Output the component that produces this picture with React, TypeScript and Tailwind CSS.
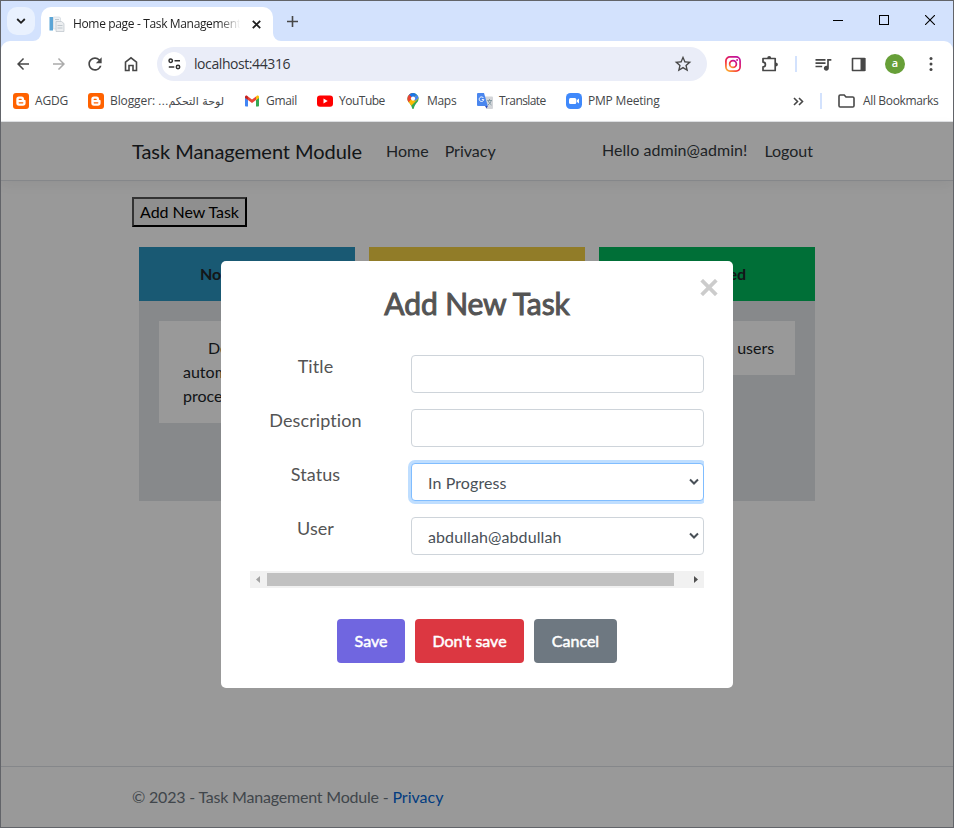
import React from 'react';
import { MdArrowBack, MdArrowForward, MdRefresh, MdStarBorder, MdQueueMusic } from 'react-icons/md';

const stroke = '#474747';

function TabStrip() {
  return (
    <div className="flex h-10 shrink-0 items-start bg-[#d3e2fd] pt-1.5">
      <div className="ml-1.5 flex size-7 items-center justify-center rounded-[10px] bg-[#e9f1fe]">
        <svg width="10" height="10" viewBox="0 0 10 10" fill="none" stroke="#1f1f1f" strokeWidth="1.8"><path d="M1.2 3 5 6.8 8.8 3" /></svg>
      </div>
      <div className="relative ml-1.5 flex h-[34px] w-[232px] items-center rounded-t-[10px] bg-white">
        <svg className="absolute bottom-0 -left-2" width="8" height="8"><path d="M8 0V8H0A8 8 0 0 0 8 0Z" fill="#fff" /></svg>
        <svg className="absolute -right-2 bottom-0" width="8" height="8"><path d="M0 0V8H8A8 8 0 0 1 0 0Z" fill="#fff" /></svg>
        <svg className="ml-2 shrink-0" width="16" height="16" viewBox="0 0 16 16">
          <rect x=".5" y="1" width="3.5" height="13.5" fill="#5ba5d6" />
          <path d="M4.500 1h6l1 1v11h-7z" fill="#edf1f5" stroke="#ccd3da" strokeWidth=".6" />
          <path d="M7 5.500h5.500l2.500 2v8H7z" fill="#eceef0" stroke="#bcc3ca" strokeWidth=".7" />
          <path d="M8.500 9.500h5M8.500 12h5M6 3.500h4" stroke="#b4bcc4" strokeWidth=".8" />
        </svg>
        <div className="ml-2 w-[169px] text-[12px] leading-4 tracking-[-0.35px] whitespace-nowrap text-[#1f1f1f] [mask-image:linear-gradient(to_right,#000_86%,transparent_99%)]">Home page - Task Management</div>
        <svg className="ml-2.5" width="9" height="9" viewBox="0 0 9 9" stroke="#1f1f1f" strokeWidth="1.8"><path d="M.8.8l7.4 7.4M8.2.8.8 8.2" /></svg>
      </div>
      <svg className="mt-[9px] ml-[14px]" width="11" height="11" viewBox="0 0 11 11" stroke="#474747" strokeWidth="1.6"><path d="M5.5 0v11M0 5.5h11" /></svg>
      <div className="mt-2 mr-[18px] ml-auto flex items-center gap-9 text-black">
        <svg width="10" height="10" stroke="currentColor"><path d="M0 5.5h10" /></svg>
        <svg width="10" height="10" fill="none" stroke="currentColor"><rect x=".5" y=".5" width="9" height="9" /></svg>
        <svg width="10" height="10" stroke="currentColor" strokeWidth="1.1"><path d="M0 0l10 10M10 0 0 10" /></svg>
      </div>
    </div>
  );
}

function Toolbar() {
  return (
    <div className="flex h-[46px] items-center pl-1 text-[#474747]">
      <div className="flex w-9 justify-center"><MdArrowBack size={18} /></div>
      <div className="flex w-9 justify-center text-[#ababab]"><MdArrowForward size={18} /></div>
      <div className="flex w-9 justify-center"><MdRefresh size={20} /></div>
      <div className="flex w-9 justify-center">
        <svg width="14" height="16" viewBox="0 0 14 16" fill="none" stroke={stroke} strokeWidth="1.6"><path d="M1.5 6.2 7 1.8l5.5 4.4v8.3H9V9.5H5v5H1.5z" /></svg>
      </div>
      <div className="ml-2 flex h-[34px] w-[550px] items-center rounded-full bg-[#eaedf8] pl-[5px]">
        <div className="flex size-6 items-center justify-center rounded-full bg-white">
          <svg width="13" height="12" viewBox="0 0 13 12" fill="none" stroke="#303030" strokeWidth="1.5"><circle cx="2.7" cy="2.7" r="1.7" /><path d="M6.5 2.7H12M.8 9h5.5" /><circle cx="10" cy="9" r="1.7" /></svg>
        </div>
        <div className="ml-2 text-[14px] leading-5 tracking-[-0.42px] text-[#33353a]">localhost:44316</div>
        <MdStarBorder size={20} className="mr-3.5 ml-auto" />
      </div>
      <svg className="ml-[18px]" width="16" height="16" viewBox="0 0 16 16" fill="none">
        <defs><linearGradient id="insta" x1="0" y1="1" x2=".7" y2="0"><stop stopColor="#ffc02e" /><stop offset=".45" stopColor="#f5283c" /><stop offset="1" stopColor="#c1129b" /></linearGradient></defs>
        <g stroke="url(#insta)" strokeWidth="1.7"><rect x=".9" y=".9" width="14.2" height="14.2" rx="4" /><circle cx="8" cy="8" r="3.4" /></g><circle cx="12.1" cy="3.9" r="1" fill="#d0158f" />
      </svg>
      <svg className="ml-5" width="18" height="18" viewBox="0 0 18 18">
        <path d="M2 3.500h12.200v12H2v-3.600a2.400 2.400 0 0 0 0-4.800z" fill="none" stroke={stroke} strokeWidth="1.700" strokeLinejoin="round" />
        <path d="M6.200 3.200a2 2.300 0 0 1 4 0zM14.600 7.500a2.300 2 0 0 1 0 4z" fill={stroke} />
      </svg>
      <div className="ml-4 h-4 w-[2px] bg-[#d3e2fd]" />
      <MdQueueMusic size={20} className="ml-4" />
      <svg className="ml-[18px]" width="15" height="15" viewBox="0 0 15 15"><path d="M1.500 1.500h12v12h-12z" fill="none" stroke={stroke} strokeWidth="1.600" strokeLinejoin="round" /><path d="M9.500 1h5v13h-5z" fill={stroke} /></svg>
      <div className="ml-[19px] flex size-5 items-center justify-center rounded-full bg-[#679f38] pb-px text-[11px] font-semibold text-white">a</div>
      <svg className="ml-6" width="4" height="16" fill={stroke}><circle cx="2" cy="2.5" r="1.5" /><circle cx="2" cy="8" r="1.5" /><circle cx="2" cy="13.5" r="1.5" /></svg>
    </div>
  );
}

const Blogger = () => (
  <svg width="16" height="16" viewBox="0 0 16 16"><rect width="16" height="16" rx="3" fill="#ff6200" /><path d="M6 3.5h2.5A2.5 2.5 0 0 1 11 6c0 .8.3 1 1 1 .4 0 .6.3.6.7V10a2.7 2.7 0 0 1-2.7 2.7H6A2.7 2.7 0 0 1 3.3 10V6.2A2.7 2.7 0 0 1 6 3.5Z" fill="#fff" /><path d="M6.2 6.3h2M6.2 9.8h3.6" stroke="#ff6200" strokeWidth="1.3" strokeLinecap="round" /></svg>
);
const Gmail = () => (
  <svg width="16" height="16" viewBox="0 0 16 16"><path d="M1 4.5v8.2c0 .5.4.8.8.8H4V6.8z" fill="#4285f4" /><path d="M12 6.8v6.7h2.2c.5 0 .8-.3.8-.8V4.5z" fill="#34a853" /><path d="M4 7V3.5l4 3 4-3V7l-4 3z" fill="#ea4335" /><path d="M1 5V4c0-1.3 1.4-1.9 2.4-1.1l.6.5V7z" fill="#c5221f" /><path d="M15 5V4c0-1.3-1.4-1.9-2.4-1.1l-.6.5V7z" fill="#fbbc04" /></svg>
);
const YouTube = () => (
  <svg width="16" height="16" viewBox="0 0 16 16"><rect y="2.4" width="16" height="11.4" rx="3" fill="#f00" /><path d="M6.5 5.6v5L10.7 8.1z" fill="#fff" /></svg>
);
const Maps = () => (
  <svg width="16" height="16" viewBox="0 0 16 16">
    <defs><clipPath id="pin"><path d="M8 0a5.6 5.6 0 0 1 5.6 5.6c0 3.8-3.4 4.8-4.6 9.1C8.800 15.500 8.500 16 8 16s-.8-.5-1-1.3C5.800 10.400 2.400 9.400 2.400 5.600A5.600 5.600 0 0 1 8 0Z" /></clipPath></defs>
    <g clipPath="url(#pin)"><path d="M0 0h16v16H0z" fill="#34a853" /><path d="M0 12V5l6 2 4-5 4 3-9 9z" fill="#fbbc04" /><path d="M0 0h7l1 4-5 6H0z" fill="#ea4335" /><path d="M4 1.500 8 5.600 13 0H5z" fill="#1a73e8" /><path d="M8 5.600 13 1l2 3-5 4z" fill="#4285f4" /></g><circle cx="8" cy="5.600" r="2.100" fill="#fff" />
  </svg>
);
const Translate = () => (
  <svg width="16" height="16" viewBox="0 0 16 16"><path d="M6 3.500h9a1 1 0 0 1 1 1V15a1 1 0 0 1-1 1H9.500z" fill="#d3d5d9" /><path d="M1 0h6l3.800 13H1a1 1 0 0 1-1-1V1a1 1 0 0 1 1-1Z" fill="#4a86ee" /><path d="M8 13h2.800L9.600 15.500z" fill="#3048b8" /><path d="M10.200 7.500H15M12.500 6v1.500m1.700 0c-.5 2-1.700 3.500-3.300 4.500m.4-4c.6 1.700 1.800 3 3.200 4" fill="none" stroke="#7d949d" strokeWidth=".9" /><path d="M6.500 5A2.300 2.300 0 1 0 6.800 6.600H4.800" fill="none" stroke="#fff" /></svg>
);
const Zoom = () => (
  <svg width="16" height="16" viewBox="0 0 16 16"><rect width="16" height="16" rx="4.500" fill="#4089fb" /><rect x="3" y="5" width="7.300" height="6" rx="1.500" fill="#fff" /><path d="M10.800 7.200 13 5.500v5l-2.200-1.700z" fill="#fff" /></svg>
);

function Bookmark({ icon, width, children }: { icon: React.ReactNode; width: string; children: React.ReactNode }) {
  return <div className={`flex shrink-0 items-center gap-1.5 whitespace-nowrap ${width}`}>{icon}<span>{children}</span></div>;
}

function Bookmarks() {
  return (
    <div className="flex h-[28px] items-center pl-3 text-[12px] text-[#45474a]">
      <Bookmark icon={<Blogger />} width="w-[75px] tracking-[-0.2px]">AGDG</Bookmark>
      <Bookmark icon={<Blogger />} width="w-[156px] tracking-[-0.1px]">Blogger: <bdi dir="rtl" className="font-['DejaVu_Sans',sans-serif] text-[11px]">لوحة التحكم...</bdi></Bookmark>
      <Bookmark icon={<Gmail />} width="w-[73px] tracking-[-0.3px]">Gmail</Bookmark>
      <Bookmark icon={<YouTube />} width="w-[88px] tracking-[-0.5px]">YouTube</Bookmark>
      <Bookmark icon={<Maps />} width="w-[72px] tracking-[-0.3px]">Maps</Bookmark>
      <Bookmark icon={<Translate />} width="w-[89px] tracking-[-0.6px]">Translate</Bookmark>
      <Bookmark icon={<Zoom />} width="w-[100px] tracking-[-0.2px]">PMP Meeting</Bookmark>
      <svg className="ml-auto" width="11" height="9" viewBox="0 0 11 9" fill="none" stroke={stroke} strokeWidth="1.600"><path d="m1 1 3.500 3.500L1 8M6 1l3.500 3.500L6 8" /></svg>
      <div className="ml-4 h-4 w-[2px] bg-[#d3e2fd]" />
      <svg className="ml-4" width="17" height="14" viewBox="0 0 17 14" fill="none" stroke={stroke} strokeWidth="1.600"><path d="M1 2.200Q1 1 2.200 1h4l1.800 2h6.700q1.300 0 1.300 1.300v7.400q0 1.300-1.300 1.300H2.200Q1 13 1 11.700z" /></svg>
      <span className="mr-[14px] ml-2 w-[76px] tracking-[-0.35px] whitespace-nowrap">All Bookmarks</span>
    </div>
  );
}

function Column({ title, color, children }: { title: string; color: string; children?: React.ReactNode }) {
  return (
    <div className="h-[254px] w-[216px] bg-[#e2e4e8] text-center">
      <div className={`flex h-[54px] items-center justify-center font-bold ${color}`}>{title}</div>
      {children && <div className="mx-5 mt-5 bg-white py-[15px] leading-6">{children}</div>}
    </div>
  );
}

function Page() {
  return (
    <div className="flex h-full flex-col text-[16px] leading-6 text-[#212529]">
      <header className="flex h-[59px] shrink-0 items-center border-b border-[#dee2e6] pr-[140px] pl-[131px] text-[#343a40] shadow-[0_4px_12px_rgba(0,0,0,0.05)]">
        <span className="text-[20px] tracking-[-0.05px] text-[#212529]">Task Management Module</span>
        <span className="ml-6">Home</span>
        <span className="ml-4">Privacy</span>
        <span className="-mt-0.5 ml-auto tracking-[0.05px]">Hello admin@admin!</span>
        <span className="ml-[17px]">Logout</span>
      </header>
      <main className="flex-1 px-[131px] pt-4">
        <button className="h-[30px] w-[115px] border-2 border-t-[#555] border-r-black border-b-black border-l-[#555] bg-[#efefef] px-1 tracking-[-0.05px] whitespace-nowrap text-black">Add New Task</button>
        <div className="mt-5 ml-[7px] flex gap-3.5">
          <Column title="Not Started" color="bg-[#2b94c0] pr-[11px]">
            <div className="px-6 text-left"><span className="ml-[25px]">Develop an</span><br />automate task<br />process</div>
          </Column>
          <Column title="In Progress" color="bg-[#f2cf43]" />
          <Column title="Completed" color="bg-[#00b95d]"><div className="pl-1.5">Add tasks to users</div></Column>
        </div>
      </main>
      <footer className="h-[61px] shrink-0 border-t border-[#dee2e6] px-[131px] pt-[18px] text-[#6c757d]"><span className="tracking-[-0.2px]">© 2023 - Task Management Module - </span><a className="text-[#0366d6]">Privacy</a></footer>
    </div>
  );
}

function Field({ label, value, focused = false }: { label: string; value?: string; focused?: boolean }) {
  return (
    <div className="flex h-[54px]">
      <label className="w-[131px] text-center text-[18px] leading-[22px] tracking-[0.1px]">{label}</label>
      <div className={`ml-[30px] flex h-[38px] w-[293px] items-center justify-between rounded-[4px] border bg-white pr-1 pl-4 text-[16px] tracking-[0.1px] text-[#495057] ${focused ? 'border-[#80bdff] shadow-[0_0_0_3px_#bfdeff]' : 'border-[#ced4da]'}`}>
        {value && <><span className="pt-0.5">{value}</span><svg width="10" height="8" viewBox="0 0 10 8" fill="none" stroke="#495057" strokeWidth="2"><path d="m1 1.500 4 4 4-4" /></svg></>}
      </div>
    </div>
  );
}

function Dialog() {
  return (
    <div className="relative flex h-[427px] w-[512px] flex-col items-center rounded-[5px] bg-white text-[#545454]">
      <svg className="absolute top-[18px] right-[15px]" width="18" height="17" viewBox="0 0 18 17" stroke="#ccc" strokeWidth="3.800"><path d="M1.700 1.200 16.300 15.800M16.300 1.200 1.700 15.800" /></svg>
      <h2 className="mt-6 mb-px text-[30px] leading-9 font-normal tracking-[-0.1px] [-webkit-text-stroke:1px_#545454]">Add New Task</h2>
      <div className="mt-[30px] h-[219px] w-[454px] overflow-hidden pt-[3px]">
        <Field label="Title" />
        <Field label="Description" />
        <Field label="Status" value="In Progress" focused />
        <Field label="User" value="abdullah@abdullah" />
      </div>
      <div className="flex h-[17px] w-[454px] items-center justify-between bg-[#f1f1f1] pr-1.5 pl-1.5">
        <svg width="4" height="7" fill="#a3a3a3"><path d="M4 0v7L0 3.500z" /></svg>
        <div className="mr-5 ml-[7px] h-[13px] flex-1 bg-[#c1c1c1]" />
        <svg width="4" height="7" fill="#505050"><path d="M0 0v7l4-3.500z" /></svg>
      </div>
      <div className="mt-[31px] flex h-11 gap-2.5 text-[16px] text-white [-webkit-text-stroke:0.5px_white]">
        <button className="w-[68px] rounded-[4px] bg-[#7066e0]">Save</button>
        <button className="w-[109px] rounded-[4px] bg-[#dc3741]">Don't save</button>
        <button className="w-[83px] rounded-[4px] bg-[#6e7881]">Cancel</button>
      </div>
    </div>
  );
}

export default function App() {
  return (
    <div className="flex h-[828px] w-[954px] flex-col overflow-hidden border border-[#626469] bg-[#d3e2fd] font-['Open_Sans',sans-serif]">
      <TabStrip />
      <div className="h-[81px] shrink-0 rounded-t-[9px] border-b border-[#dfe1e4] bg-white">
        <Toolbar />
        <Bookmarks />
      </div>
      <div className="relative min-h-0 flex-1 bg-white font-['Lato',sans-serif] [font-variant-ligatures:none]">
        <Page />
        <div className="absolute inset-0 flex items-center justify-center bg-black/40">
          <Dialog />
        </div>
      </div>
    </div>
  );
}
